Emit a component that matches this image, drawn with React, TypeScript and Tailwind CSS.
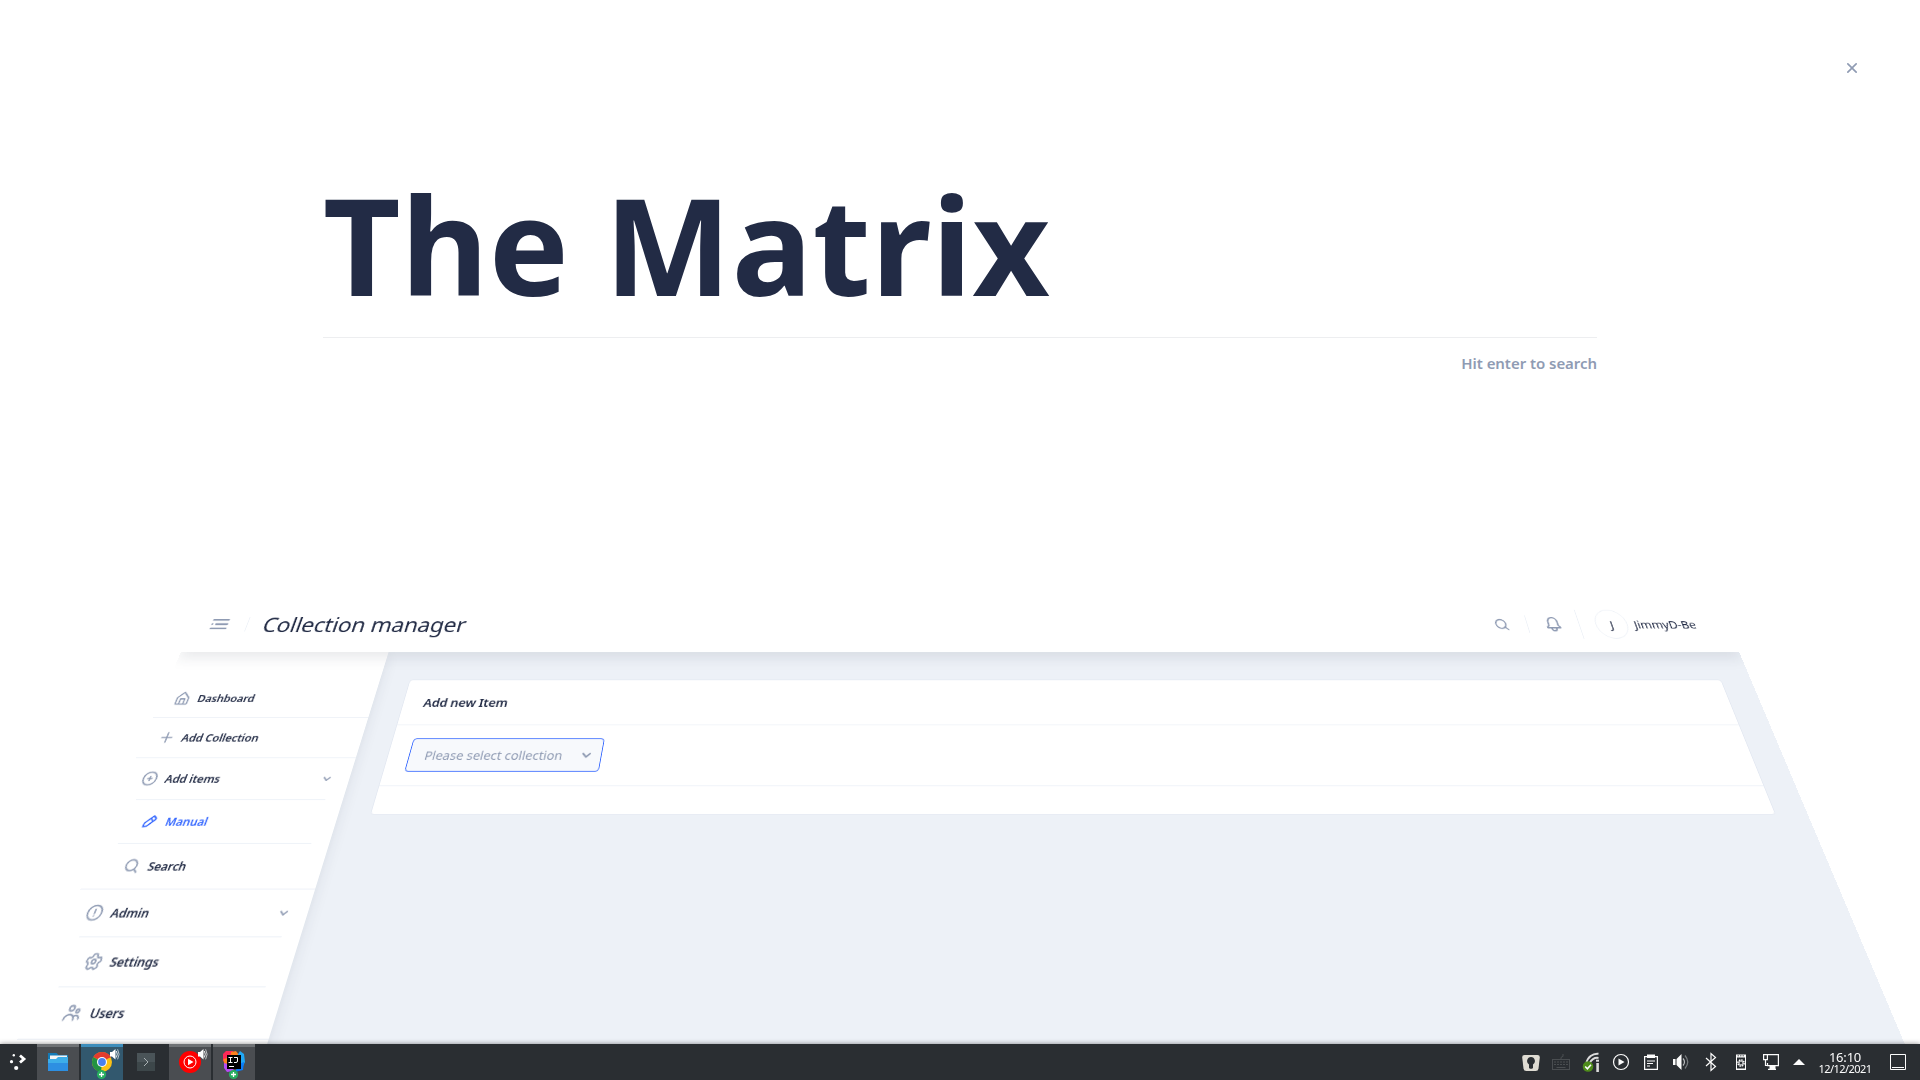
import React from "react";

type IconProps = { className?: string; children: React.ReactNode };

function Eva({ className = "", children }: IconProps) {
  return (
    <svg viewBox="0 0 24 24" fill="currentColor" className={`shrink-0 ${className}`}>
      {children}
    </svg>
  );
}

const RING = "M12 2a10 10 0 1 0 10 10A10 10 0 0 0 12 2zm0 18a8 8 0 1 1 8-8 8 8 0 0 1-8 8z";
const SEARCH =
  "M20.71 19.29l-3.4-3.39A7.92 7.92 0 0 0 19 11a8 8 0 1 0-8 8 7.92 7.92 0 0 0 4.9-1.69l3.39 3.4a1 1 0 0 0 1.42 0 1 1 0 0 0 0-1.42zM5 11a6 6 0 1 1 6 6 6 6 0 0 1-6-6z";
const CHEVRON =
  "M12 15.5a1 1 0 0 1-.71-.29l-4-4a1 1 0 1 1 1.42-1.42L12 13.1l3.3-3.18a1 1 0 1 1 1.38 1.44l-4 3.86a1 1 0 0 1-.68.28z";

const paths = {
  home: (
    <path d="M20.42 10.18L12.71 2.3a1 1 0 0 0-1.42 0l-7.71 7.89A2 2 0 0 0 3 11.62V20a2 2 0 0 0 1.89 2h14.22A2 2 0 0 0 21 20v-8.38a2.07 2.07 0 0 0-.58-1.44zM10 20v-6h4v6zm9 0h-3v-7a1 1 0 0 0-1-1H9a1 1 0 0 0-1 1v7H5v-8.42l7-7.15 7 7.19z" />
  ),
  plus: <path d="M19 11h-6V5a1 1 0 0 0-2 0v6H5a1 1 0 0 0 0 2h6v6a1 1 0 0 0 2 0v-6h6a1 1 0 0 0 0-2z" />,
  plusCircle: (
    <>
      <path d={RING} />
      <path d="M15 11h-2V9a1 1 0 0 0-2 0v2H9a1 1 0 0 0 0 2h2v2a1 1 0 0 0 2 0v-2h2a1 1 0 0 0 0-2z" />
    </>
  ),
  edit: (
    <path d="M19.4 7.34L16.66 4.6A2 2 0 0 0 14 4.53l-9 9a2 2 0 0 0-.57 1.21L4 18.91a1 1 0 0 0 .29.8A1 1 0 0 0 5 20h.09l4.17-.38a2 2 0 0 0 1.21-.57l9-9a1.92 1.92 0 0 0-.07-2.71zM9.08 17.62l-3 .28.27-3L12 9.32l2.7 2.7zM16 10.68L13.32 8l1.95-2L18 8.73z" />
  ),
  search: <path d={SEARCH} />,
  alert: (
    <>
      <path d={RING} />
      <circle cx="12" cy="16" r="1" />
      <path d="M12 7a1 1 0 0 0-1 1v5a1 1 0 0 0 2 0V8a1 1 0 0 0-1-1z" />
    </>
  ),
  settings: (
    <>
      <path d="M8.61 22a2.25 2.25 0 0 1-1.35-.46L5.19 20a2.37 2.37 0 0 1-.49-3.22 2.06 2.06 0 0 0 .23-1.86l-.06-.16a1.83 1.83 0 0 0-1.12-1.22h-.16a2.34 2.34 0 0 1-1.48-2.94L2.93 8a2.18 2.18 0 0 1 1.12-1.41 2.14 2.14 0 0 1 1.68-.12 1.93 1.93 0 0 0 1.78-.29l.13-.1a1.94 1.94 0 0 0 .73-1.51v-.24A2.32 2.32 0 0 1 10.66 2h2.55a2.26 2.26 0 0 1 1.6.67 2.37 2.37 0 0 1 .68 1.68v.28a1.76 1.76 0 0 0 .69 1.43l.11.08a1.74 1.74 0 0 0 1.59.26l.34-.11A2.26 2.26 0 0 1 21.1 7.8l.79 2.52a2.36 2.36 0 0 1-1.46 2.93l-.2.07A1.89 1.89 0 0 0 19 14.6a2 2 0 0 0 .25 1.65l.26.38a2.38 2.38 0 0 1-.5 3.23L17 21.41a2.24 2.24 0 0 1-3.22-.53l-.12-.17a1.75 1.75 0 0 0-1.5-.78 1.8 1.8 0 0 0-1.43.77l-.23.33A2.25 2.25 0 0 1 9 22a2 2 0 0 1-.39 0zM4.4 11.62a3.83 3.83 0 0 1 2.38 2.5v.12a4 4 0 0 1-.46 3.62.38.38 0 0 0 0 .51L8.47 20a.25.25 0 0 0 .37-.07l.23-.33a3.77 3.77 0 0 1 6.2 0l.12.18a.3.3 0 0 0 .18.12.25.25 0 0 0 .19-.05l2.06-1.56a.36.36 0 0 0 .07-.49l-.26-.38A4 4 0 0 1 17.1 14a3.92 3.92 0 0 1 2.49-2.61l.2-.07a.34.34 0 0 0 .19-.44l-.78-2.49a.35.35 0 0 0-.2-.19.21.21 0 0 0-.19 0l-.34.11a3.74 3.74 0 0 1-3.43-.57L15 7.65a3.76 3.76 0 0 1-1.49-3v-.31a.37.37 0 0 0-.1-.26.31.31 0 0 0-.21-.08h-2.54a.31.31 0 0 0-.29.33v.25a3.9 3.9 0 0 1-1.52 3.09l-.13.1a3.91 3.91 0 0 1-3.63.59.22.22 0 0 0-.14 0 .28.28 0 0 0-.12.15L4 11.12a.36.36 0 0 0 .22.45z" />
      <path d="M12 15.5a3.5 3.5 0 1 1 3.5-3.5 3.5 3.5 0 0 1-3.5 3.5zm0-5a1.5 1.5 0 1 0 1.5 1.5 1.5 1.5 0 0 0-1.5-1.5z" />
    </>
  ),
  people: (
    <path d="M9 11a4 4 0 1 0-4-4 4 4 0 0 0 4 4zm0-6a2 2 0 1 1-2 2 2 2 0 0 1 2-2zM17 13a3 3 0 1 0-3-3 3 3 0 0 0 3 3zm0-4a1 1 0 1 1-1 1 1 1 0 0 1 1-1zM17 14a5 5 0 0 0-3.06 1.05A7 7 0 0 0 2 20a1 1 0 0 0 2 0 5 5 0 0 1 10 0 1 1 0 0 0 2 0 6.9 6.9 0 0 0-.86-3.35A3 3 0 0 1 20 19a1 1 0 0 0 2 0 5 5 0 0 0-5-5z" />
  ),
};

function MenuLink({
  icon,
  label,
  active = false,
  arrow = false,
}: {
  icon: React.ReactNode;
  label: string;
  active?: boolean;
  arrow?: boolean;
}) {
  return (
    <a className="flex h-12 items-center px-4">
      <Eva className={active ? "mr-2 size-5 text-[#3366ff]" : "mr-2 size-5 text-[#8f9bb3]"}>{icon}</Eva>
      <span
        className={
          active
            ? "grow text-[13px] leading-6 font-semibold tracking-[-0.08px] text-[#3366ff]"
            : "grow text-[13px] leading-6 font-semibold tracking-[-0.08px] text-[#222b45]"
        }
      >
        {label}
      </span>
      {arrow && (
        <Eva className="size-5 text-[#8f9bb3]">
          <path d={CHEVRON} />
        </Eva>
      )}
    </a>
  );
}

function Sidebar() {
  return (
    <nav className="w-64 shrink-0 bg-white pt-9 shadow-[0_8px_16px_0_rgba(44,51,73,0.1)]">
      <ul>
        <li className="border-b border-[#edf1f7]">
          <MenuLink icon={paths.home} label="Dashboard" />
        </li>
        <li className="border-b border-[#edf1f7]">
          <MenuLink icon={paths.plus} label="Add Collection" />
        </li>
        <li className="border-b border-[#edf1f7]">
          <MenuLink icon={paths.plusCircle} label="Add items" arrow />
          <ul className="mx-5">
            <li className="border-y border-[#edf1f7]">
              <MenuLink icon={paths.edit} label="Manual" active />
            </li>
            <li>
              <MenuLink icon={paths.search} label="Search" />
            </li>
          </ul>
        </li>
        <li className="border-b border-[#edf1f7]">
          <MenuLink icon={paths.alert} label="Admin" arrow />
          <ul className="mx-5">
            <li className="border-y border-[#edf1f7]">
              <MenuLink icon={paths.settings} label="Settings" />
            </li>
            <li>
              <MenuLink icon={paths.people} label="Users" />
            </li>
          </ul>
        </li>
      </ul>
    </nav>
  );
}

function Header() {
  return (
    <header className="relative z-10 flex h-[76px] items-center justify-between bg-white px-5 text-[#222b45] shadow-[0_8px_16px_0_rgba(44,51,73,0.1)]">
      <div className="flex items-center">
        <Eva className="size-7 text-[#8f9bb3]">
          <circle cx="4" cy="12" r="1" />
          <rect x="7" y="11" width="14" height="2" rx=".94" />
          <rect x="3" y="16" width="18" height="2" rx=".94" />
          <rect x="3" y="6" width="18" height="2" rx=".94" />
        </Eva>
        <div className="ml-5 h-5 border-l border-[#edf1f7] pl-5 text-[28px] leading-5 tracking-[-0.2px] whitespace-nowrap">
          Collection manager
        </div>
      </div>
      <div className="flex w-[274px] items-center">
        <Eva className="ml-[1px] size-[21px] text-[#8f9bb3]">
          <path d={SEARCH} />
        </Eva>
        <div className="ml-[21px] flex h-6 items-center border-l border-[#edf1f7] px-5">
          <Eva className="size-6 text-[#8f9bb3]">
            <path d="M20.52 15.21l-1.8-1.81V8.94a6.86 6.86 0 0 0-5.82-6.88 6.74 6.74 0 0 0-7.62 6.67v4.67l-1.8 1.81A1.64 1.64 0 0 0 4.64 18H8v.34A3.84 3.84 0 0 0 12 22a3.84 3.84 0 0 0 4-3.66V18h3.36a1.64 1.64 0 0 0 1.16-2.79zM14 18.34A1.88 1.88 0 0 1 12 20a1.88 1.88 0 0 1-2-1.66V18h4zM5.51 16l1.18-1.18a2 2 0 0 0 .59-1.42V8.73A4.73 4.73 0 0 1 8.9 5.17 4.67 4.67 0 0 1 12.64 4a4.86 4.86 0 0 1 4.08 4.9v4.5a2 2 0 0 0 .58 1.42L18.49 16z" />
          </Eva>
        </div>
        <div className="flex h-10 items-center border-l border-[#edf1f7] pl-5">
          <div className="flex size-10 items-center justify-center rounded-full border border-[#edf1f7] text-[15px]">
            J
          </div>
          <span className="ml-2 text-[15px] tracking-[-0.1px] whitespace-nowrap">JimmyD-Be</span>
        </div>
      </div>
    </header>
  );
}

function AddItemCard() {
  return (
    <section className="rounded border border-[#e4e9f2] bg-white">
      <div className="border-b border-[#edf1f7] px-6 py-4 text-[15px] leading-6 font-semibold tracking-[-0.1px] text-[#222b45]">
        Add new Item
      </div>
      <div className="px-6 py-4">
        <div className="flex h-10 w-[225px] items-center justify-between rounded border border-[#3366ff] bg-[#f7f9fc] pr-[5.5px] pl-[17.5px] text-[#8f9bb3]">
          <span className="text-[15px] leading-6 tracking-[-0.02px] whitespace-nowrap">Please select collection</span>
          <Eva className="size-6">
            <path d={CHEVRON} />
          </Eva>
        </div>
      </div>
      <div className="h-[33px] border-t border-[#edf1f7]" />
    </section>
  );
}

function SearchOverlay() {
  return (
    <div className="h-full bg-white">
      <div className="flex h-[177px] justify-end pt-[58px] pr-[58px]">
        <Eva className="size-5 text-[#8f9bb3]">
          <path d="M13.41 12l4.3-4.29a1 1 0 1 0-1.42-1.42L12 10.59l-4.29-4.3a1 1 0 0 0-1.42 1.42l4.3 4.29-4.3 4.29a1 1 0 0 0 0 1.42 1 1 0 0 0 1.42 0l4.29-4.3 4.29 4.3a1 1 0 0 0 1.42 0 1 1 0 0 0 0-1.42z" />
        </Eva>
      </div>
      <div className="mx-auto w-[1274px]">
        <div className="h-[161px] border-b border-[#edeef0] text-[134.4px] leading-none font-bold tracking-[0.38px] text-[#222b45]">
          The Matrix
        </div>
        <p className="mt-[13px] text-right text-[15px] leading-6 font-semibold tracking-[-0.05px] text-[#8f9bb3]">
          Hit enter to search
        </p>
      </div>
    </div>
  );
}

function TaskIcon({ children }: { children: React.ReactNode }) {
  return (
    <svg viewBox="0 0 42 36" className="h-9 w-[42px]">
      {children}
    </svg>
  );
}

function Speaker() {
  return (
    <g>
      <path d="M29 8h2l3.500-3v10.500L31 12.500h-2z" fill="#fff" />
      <path d="M35.300 7q2 3.200 0 6.500" fill="none" stroke="#fff" strokeWidth=".9" />
      <path d="M36.600 5.300q3 5 0 10" fill="none" stroke="#dfe1e2" strokeWidth=".8" />
    </g>
  );
}

function PlusBadge() {
  return (
    <g>
      <circle cx="20.500" cy="30.500" r="4.600" fill="#27ae60" />
      <path d="M20.500 28v5M18 30.500h5" stroke="#fff" strokeWidth="1.300" />
    </g>
  );
}

function TrayCell({ children }: { children: React.ReactNode }) {
  return (
    <div className="flex w-[30px] items-center justify-center">
      <svg viewBox="0 0 24 24" className="size-6" fill="none" stroke="#fcfcfc" strokeWidth="1.200">
        {children}
      </svg>
    </div>
  );
}

function Taskbar() {
  return (
    <footer className="absolute inset-x-0 bottom-0 z-20 flex h-9 bg-[#2a2e32] text-[#fcfcfc] shadow-[0_0_5px_0_rgba(0,0,0,0.45)]">
      <div className="w-[37px]">
        <svg viewBox="0 0 37 36" className="h-9 w-[37px]" fill="#fff">
          <circle cx="13.800" cy="11.200" r="1.200" />
          <circle cx="11.500" cy="17.700" r="1.600" />
          <circle cx="16.200" cy="24" r="2.100" />
          <path d="M20 11.500l4 3.500-4 3.500" fill="none" stroke="#fff" strokeWidth="2.800" />
        </svg>
      </div>
      <div className="w-[42px] border-t-[3px] border-[#6f7275] bg-[#4a4d51]">
        <div className="-mt-[3px]">
          <TaskIcon>
            <path d="M11 9h8.500l2 2H31v14H11z" fill="#147bb8" />
            <path d="M13 11.500h17v6H13z" fill="#f5f5f5" />
            <path d="M11 15h8l2-2h10v14H11z" fill="#3daee9" />
            <path d="M11 19h20v8H11z" fill="#2d8fe2" />
          </TaskIcon>
        </div>
      </div>
      <div className="ml-0.5 w-[42px] border-t-[3px] border-[#3d8dbb] bg-[#32586e]">
        <div className="-mt-[3px]">
          <TaskIcon>
            <circle cx="21" cy="18" r="10" fill="#fbc116" />
            <path d="M21 18 12.340 13A10 10 0 0 1 29.660 13z" fill="#e33b2e" />
            <path d="M21 18 12.340 13A10 10 0 0 0 20 28z" fill="#229342" />
            <path d="M21 13h8.660" stroke="#e33b2e" strokeWidth="1" />
            <circle cx="21" cy="18" r="5" fill="#fff" />
            <circle cx="21" cy="18" r="3.900" fill="#4a80f0" />
            <Speaker />
            <PlusBadge />
          </TaskIcon>
        </div>
      </div>
      <div className="ml-0.5 w-[42px]">
        <TaskIcon>
          <rect x="12" y="9" width="18" height="18" fill="#3d474a" />
          <path d="M12 9h18v9H12z" fill="#4a5458" />
          <path d="M19 14l4 4-4 4" fill="none" stroke="#a9b1b3" strokeWidth="1" />
        </TaskIcon>
      </div>
      <div className="ml-0.5 w-[42px] border-t-[3px] border-[#6f7275] bg-[#4a4d51]">
        <div className="-mt-[3px]">
          <TaskIcon>
            <circle cx="21" cy="18" r="11" fill="#f00" />
            <circle cx="21" cy="18" r="6" fill="none" stroke="#fff" strokeWidth="1" />
            <path d="M19 14.800l5.500 3.200-5.500 3.200z" fill="#fff" />
            <Speaker />
          </TaskIcon>
        </div>
      </div>
      <div className="ml-0.5 w-[42px] border-t-[3px] border-[#6f7275] bg-[#4a4d51]">
        <div className="-mt-[3px]">
          <TaskIcon>
            <path d="M10 10l3-3h7l2 6-9 6-3-2z" fill="#fe2857" />
            <path d="M18 8l5-1 3 4-3 5h-6z" fill="#fc801d" />
            <path d="M24 12l3-5 4 3 1 8-2 4-6-4z" fill="#21a8f5" />
            <path d="M26 20l5-2-1 8-8 2z" fill="#087cfa" />
            <path d="M11 18l6-2 4 11-7 1-3-4z" fill="#b74af7" />
            <path d="M10.500 15l4-1v6l-3.500-1z" fill="#fc801d" />
            <rect x="14" y="11" width="14" height="14" fill="#000" />
            <path d="M15.500 13.500h4M17.500 13.500v5M15.500 18.500h4M21 13.500h3.500v3.500q0 1.500-1.500 1.500h-2" fill="none" stroke="#fff" strokeWidth="1" />
            <path d="M16 22.500h5" stroke="#fff" strokeWidth="1" />
            <PlusBadge />
          </TaskIcon>
        </div>
      </div>

      <div className="ml-auto flex">
        <TrayCell>
          <path d="M5.500 5h13q2.500 0 2.300 2.500l-1.300 11q-.3 2.500-2.800 2.500H7.300q-2.500 0-2.800-2.500l-1.300-11Q3 5 5.500 5z" fill="#dfdcd3" stroke="none" />
          <path d="M12 7a4 4 0 0 0-2 7.400V18l1 .8h2l1-.8v-3.600A4 4 0 0 0 12 7z" fill="#2a2e32" stroke="none" />
        </TrayCell>
        <TrayCell>
          <g stroke="#4a4e51" strokeWidth="1">
            <rect x="3.500" y="9.500" width="17" height="10" />
            <path d="M5 12h14M5 14.500h14" strokeDasharray="2 1" />
            <path d="M7.500 17.500h9M12 9.500V8q0-1.500 2-1.500V4" />
          </g>
        </TrayCell>
        <TrayCell>
          <path d="M7.500 13A11 11 0 0 1 19.500 3.700M10.500 13.500a8 8 0 0 1 9-5.500" strokeWidth="2" stroke="#dcdcdc" />
          <path d="M17 10.700h3" strokeWidth="2" stroke="#dcdcdc" />
          <path d="M18.600 13v9" strokeWidth="2.600" stroke="#dcdcdc" />
          <circle cx="9" cy="16.500" r="5.300" fill="#4e8b1b" stroke="none" />
          <path d="M6.200 16.500l2.200 2.300 3.600-4" strokeWidth="1.600" />
        </TrayCell>
        <TrayCell>
          <circle cx="12" cy="12" r="7.500" />
          <path d="M9.500 8.500l6 3.500-6 3.500z" fill="#fcfcfc" stroke="none" />
        </TrayCell>
        <TrayCell>
          <path d="M5.600 6.600h12.800v12.800H5.600z" />
          <path d="M8 4.500h8V8H8z" fill="#fcfcfc" stroke="none" />
          <path d="M8 11h8M8 13.500h6M8 16h3" />
        </TrayCell>
        <TrayCell>
          <path d="M4 9h2.500v6H4zM7.500 9l5-5v16l-5-5z" fill="#fcfcfc" stroke="none" />
          <path d="M14 8.500q3 3.500 0 7" stroke="#b9bbbd" />
          <path d="M16 5.500q5.500 6.500 0 13" stroke="#777b7e" />
        </TrayCell>
        <TrayCell>
          <path d="M7 8l9.500 8.500L12 20.500v-17L16.500 7.500 7 16" />
        </TrayCell>
        <TrayCell>
          <path d="M7 4.500h10v15.500H7z" fill="#fcfcfc" stroke="none" />
          <path d="M8.500 5.800h7" stroke="#2a2e32" strokeWidth=".8" strokeDasharray="1.500 1" />
          <rect x="8" y="7.500" width="8" height="11" fill="#2a2e32" stroke="none" />
          <circle cx="12" cy="13" r="3.100" strokeWidth="1.400" strokeDasharray="1.600 .8" />
          <circle cx="12" cy="13" r="2" strokeWidth=".9" />
        </TrayCell>
        <TrayCell>
          <path d="M9 4.600h10.400v11H8.500V13M4.600 4.600h3.800v5H4.600zM6.500 9.500v6h3M9 19.400h8M13 16v3.500" />
          <path d="M10.500 16h6v3.800h-6z" fill="#fcfcfc" stroke="none" />
        </TrayCell>
        <div className="flex w-[26px] items-center justify-center">
          <svg viewBox="0 0 12 6" className="h-1.5 w-3" fill="#fcfcfc">
            <path d="M6 0l6 6H0z" />
          </svg>
        </div>
        <div className="flex w-[66px] flex-col items-center pt-[7px]">
          <span className="text-[13px] leading-[12px] tracking-[-0.2px]">16:10</span>
          <span className="text-[11px] leading-[11px] tracking-[-0.55px] whitespace-nowrap">12/12/2021</span>
        </div>
        <div className="flex w-[42px] items-center pl-3">
          <svg viewBox="0 0 16 16" className="size-4" fill="none" stroke="#fcfcfc">
            <path d="M.5.500h15v15H.5zM2 13.500h12" />
          </svg>
        </div>
      </div>
    </footer>
  );
}

export default function App() {
  return (
    <div className="relative h-[1080px] w-[1920px] overflow-hidden bg-white font-['Noto_Sans','Open_Sans',sans-serif]">
      <SearchOverlay />
      <div className="absolute inset-0 flex flex-col overflow-hidden bg-[#edf1f7] [transform:perspective(1000px)_translate3d(0,540px,0)_rotateX(30deg)]">
        <Header />
        <div className="flex grow">
          <Sidebar />
          <main className="grow p-9">
            <AddItemCard />
          </main>
        </div>
      </div>
      <Taskbar />
    </div>
  );
}
